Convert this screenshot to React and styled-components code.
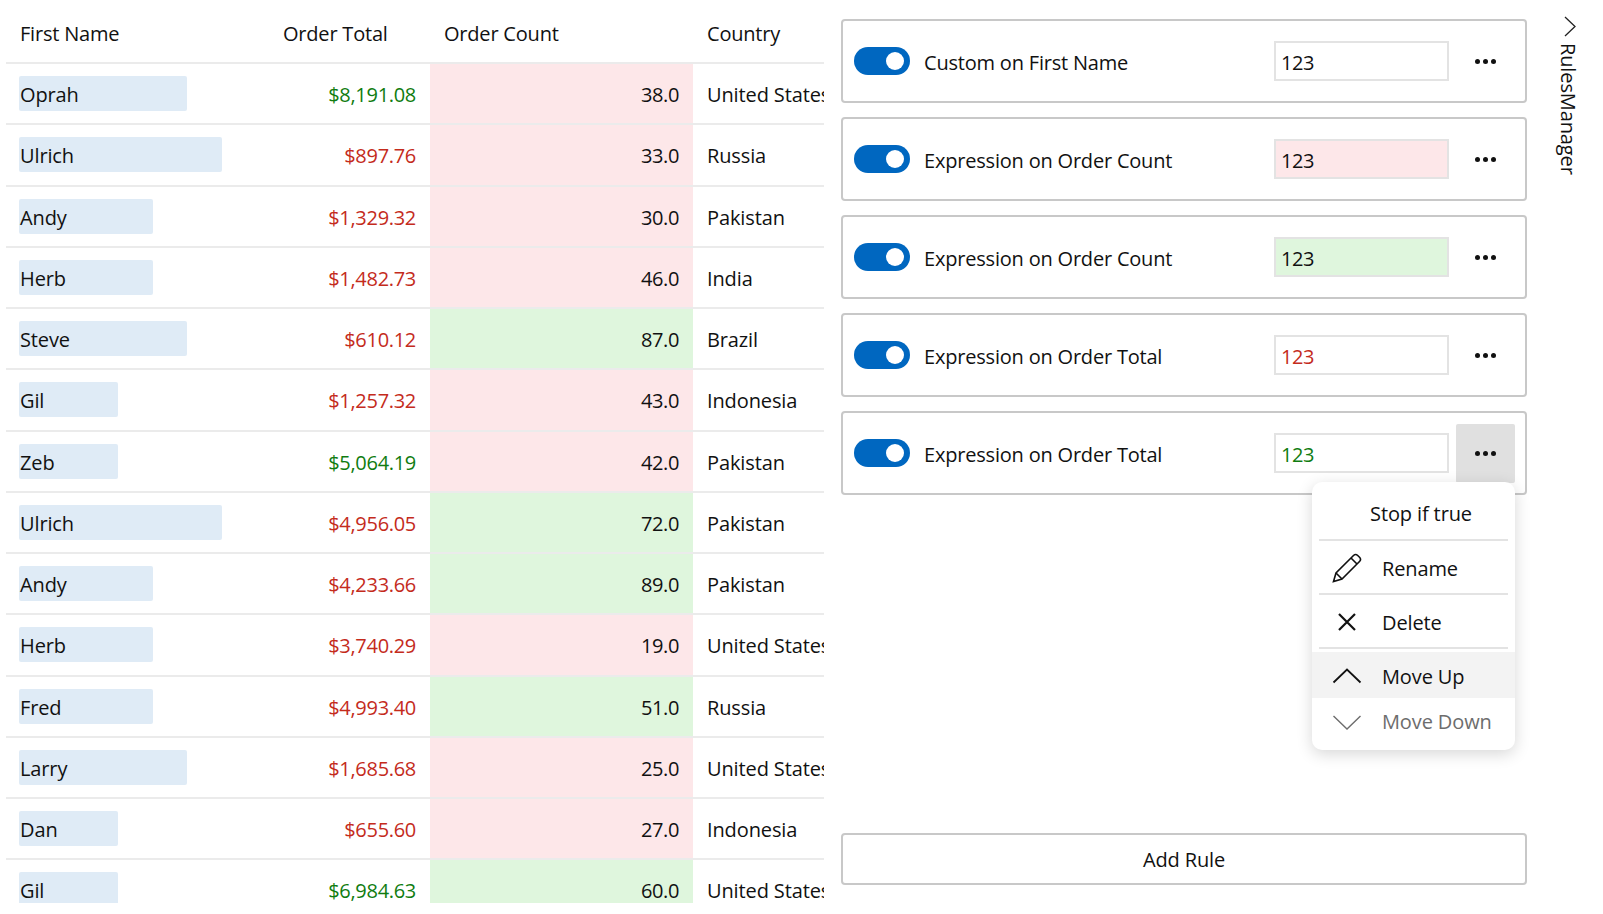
import React from 'react'
import styled, { createGlobalStyle } from 'styled-components'

const GlobalStyle = createGlobalStyle`
  html, body {
    margin: 0;
    padding: 0;
    background: #fff;
  }
  body {
    font-family: "Open Sans", "Noto Sans", sans-serif;
    font-size: 20px;
    letter-spacing: -0.12px;
    color: #111;
  }
`

const Page = styled.div`
  width: 1603px;
  height: 914px;
  overflow: hidden;
  display: flex;
  background: #fff;
`

const Table = styled.div`
  width: 818px;
  height: 903px;
  margin-left: 6px;
  overflow: hidden;
  flex-shrink: 0;
`

const Row = styled.div`
  display: grid;
  grid-template-columns: 263px 161px 263px 131px;
  box-sizing: border-box;
  height: ${p => (p.$header ? '64px' : '61.25px')};
  border-bottom: 2px solid #ebebeb;
  ${p => p.$header && 'padding-top: 4px;'}
`

const HeaderCell = styled.div`
  display: flex;
  align-items: center;
  padding-left: 14px;
  letter-spacing: -0.2px;
`

const NameCell = styled.div`
  display: flex;
  align-items: center;
  padding-left: 13px;
`

const NameBar = styled.div`
  box-sizing: border-box;
  width: ${p => p.$width}px;
  height: 35px;
  padding: 2px 0 0 1px;
  display: flex;
  align-items: center;
  background: #dfebf6;
  border-radius: 2px;
`

const TotalCell = styled.div`
  display: flex;
  align-items: center;
  justify-content: flex-end;
  padding: 2px 14px 0 0;
  letter-spacing: -0.3px;
  color: ${p => (p.$up ? '#107c10' : '#c42b1c')};
`

const CountCell = styled.div`
  display: flex;
  align-items: center;
  justify-content: flex-end;
  padding: 2px 14px 0 0;
  letter-spacing: -0.4px;
  background: ${p => (p.$high ? '#dff6dd' : '#fde7e9')};
`

const CountryCell = styled.div`
  display: flex;
  align-items: center;
  padding: 2px 0 0 14px;
  white-space: nowrap;
  overflow: hidden;
`

const Panel = styled.div`
  width: 686px;
  margin-left: 17px;
  flex-shrink: 0;
  display: flex;
  flex-direction: column;
  padding: 19px 0 29px;
  box-sizing: border-box;
`

const RuleList = styled.div`
  flex: 1;
  display: flex;
  flex-direction: column;
  gap: 14px;
`

const RuleCard = styled.div`
  position: relative;
  box-sizing: border-box;
  height: 84px;
  display: flex;
  align-items: center;
  padding: 0 10px 0 11px;
  border: 2px solid #c8c8c8;
  border-radius: 4px;
`

const Toggle = styled.div`
  width: 56px;
  height: 28px;
  border-radius: 14px;
  background: #0067c0;
  display: flex;
  align-items: center;
  justify-content: flex-end;
  padding-right: 6px;
  box-sizing: border-box;
  flex-shrink: 0;
`

const Knob = styled.div`
  width: 18px;
  height: 18px;
  border-radius: 50%;
  background: #fff;
`

const RuleName = styled.div`
  flex: 1;
  margin-left: 14px;
  padding-top: 2px;
  letter-spacing: -0.2px;
`

const Preview = styled.div`
  box-sizing: border-box;
  width: 175px;
  height: 40px;
  padding: 2px 0 0 5px;
  letter-spacing: -0.4px;
  display: flex;
  align-items: center;
  border: 2px solid #e3e3e3;
  background: ${p => p.$bg || '#fff'};
  color: ${p => p.$color || '#111'};
`

const MenuButton = styled.div`
  width: 59px;
  height: 59px;
  margin-left: 7px;
  display: flex;
  align-items: center;
  justify-content: center;
  gap: 3px;
  border-radius: 2px;
  background: ${p => (p.$open ? '#e0e0e0' : 'transparent')};
`

const Dot = styled.span`
  width: 5px;
  height: 5px;
  border-radius: 50%;
  background: #111;
`

const Flyout = styled.div`
  position: absolute;
  z-index: 2;
  top: 69px;
  right: 10px;
  width: 203px;
  height: 268px;
  box-sizing: border-box;
  background: #fff;
  border-radius: 10px;
  box-shadow: 0 4px 16px rgba(0, 0, 0, 0.16);
  display: flex;
  flex-direction: column;
`

const StopItem = styled.div`
  box-sizing: border-box;
  height: 57px;
  padding: 5px 0 0 15px;
  display: flex;
  align-items: center;
  justify-content: center;
  flex-shrink: 0;
`

const Separator = styled.div`
  height: 2px;
  margin: 0 7px;
  background: #e3e3e3;
  flex-shrink: 0;
`

const MenuItem = styled.div`
  box-sizing: border-box;
  height: ${p => p.$height}px;
  margin-top: ${p => p.$gap || 0}px;
  padding-top: ${p => (p.$muted ? 0 : 2)}px;
  display: flex;
  align-items: center;
  flex-shrink: 0;
  background: ${p => (p.$hover ? '#f3f3f3' : 'transparent')};
  color: ${p => (p.$muted ? '#6d6d6d' : 'inherit')};
`

const MenuIcon = styled.svg`
  width: 30px;
  height: 30px;
  margin-left: 20px;
  margin-right: 20px;
  flex-shrink: 0;
  fill: none;
  stroke: currentColor;
  stroke-width: ${p => p.$weight || 1.6};
`

const AddButton = styled.div`
  height: 52px;
  padding-top: 1px;
  box-sizing: border-box;
  border: 2px solid #c8c8c8;
  border-radius: 4px;
  display: flex;
  align-items: center;
  justify-content: center;
`

const Rail = styled.div`
  flex: 1;
  display: flex;
  flex-direction: column;
  padding: 16px 0 0 28px;
`

const RailChevron = styled.svg`
  width: 12px;
  height: 21px;
  margin-left: 9px;
  fill: none;
  stroke: #222;
  stroke-width: 1.3;
`

const RailLabel = styled.div`
  writing-mode: vertical-rl;
  align-self: flex-start;
  margin: 6px 0 0 2px;
  line-height: 22px;
`

const orders = [
  ['Oprah', 168, '$8,191.08', true, '38.0', false, 'United States'],
  ['Ulrich', 203, '$897.76', false, '33.0', false, 'Russia'],
  ['Andy', 134, '$1,329.32', false, '30.0', false, 'Pakistan'],
  ['Herb', 134, '$1,482.73', false, '46.0', false, 'India'],
  ['Steve', 168, '$610.12', false, '87.0', true, 'Brazil'],
  ['Gil', 99, '$1,257.32', false, '43.0', false, 'Indonesia'],
  ['Zeb', 99, '$5,064.19', true, '42.0', false, 'Pakistan'],
  ['Ulrich', 203, '$4,956.05', false, '72.0', true, 'Pakistan'],
  ['Andy', 134, '$4,233.66', false, '89.0', true, 'Pakistan'],
  ['Herb', 134, '$3,740.29', false, '19.0', false, 'United States'],
  ['Fred', 134, '$4,993.40', false, '51.0', true, 'Russia'],
  ['Larry', 168, '$1,685.68', false, '25.0', false, 'United States'],
  ['Dan', 99, '$655.60', false, '27.0', false, 'Indonesia'],
  ['Gil', 99, '$6,984.63', true, '60.0', true, 'United States'],
]

const rules = [
  { name: 'Custom on First Name' },
  { name: 'Expression on Order Count', bg: '#fde7e9' },
  { name: 'Expression on Order Count', bg: '#dff6dd' },
  { name: 'Expression on Order Total', color: '#c42b1c' },
  { name: 'Expression on Order Total', color: '#107c10', open: true },
]

function RuleMenu() {
  return (
    <Flyout>
      <StopItem>Stop if true</StopItem>
      <Separator />
      <MenuItem $height={52}>
        <MenuIcon viewBox="0 0 30 30">
          <path d="M1.500 28.500L4 20 21.500 2.500a3 3 0 0 1 4.200 0l1.800 1.800a3 3 0 0 1 0 4.200L10 26z" />
          <path d="M19 5l6 6M4 20l6 6" />
        </MenuIcon>
        Rename
      </MenuItem>
      <Separator />
      <MenuItem $height={52}>
        <MenuIcon viewBox="0 0 30 30" $weight={2.2}>
          <path d="M7 7l16 16M23 7L7 23" />
        </MenuIcon>
        Delete
      </MenuItem>
      <Separator />
      <MenuItem $height={46} $gap={3} $hover>
        <MenuIcon viewBox="0 0 30 30" $weight={1.8}>
          <path d="M1.500 21.500L15 8.500l13.500 13" />
        </MenuIcon>
        Move Up
      </MenuItem>
      <MenuItem $height={47} $muted>
        <MenuIcon viewBox="0 0 30 30" $weight={1.4}>
          <path d="M1.500 9L15 22l13.500-13" />
        </MenuIcon>
        Move Down
      </MenuItem>
    </Flyout>
  )
}

export default function App() {
  return (
    <Page>
      <GlobalStyle />
      <Table>
        <Row $header>
          <HeaderCell>First Name</HeaderCell>
          <HeaderCell>Order Total</HeaderCell>
          <HeaderCell>Order Count</HeaderCell>
          <HeaderCell>Country</HeaderCell>
        </Row>
        {orders.map(([name, width, total, up, count, high, country], i) => (
          <Row key={i}>
            <NameCell>
              <NameBar $width={width}>{name}</NameBar>
            </NameCell>
            <TotalCell $up={up}>{total}</TotalCell>
            <CountCell $high={high}>{count}</CountCell>
            <CountryCell>{country}</CountryCell>
          </Row>
        ))}
      </Table>
      <Panel>
        <RuleList>
          {rules.map((rule, i) => (
            <RuleCard key={i}>
              <Toggle>
                <Knob />
              </Toggle>
              <RuleName>{rule.name}</RuleName>
              <Preview $bg={rule.bg} $color={rule.color}>
                123
              </Preview>
              <MenuButton $open={rule.open}>
                <Dot />
                <Dot />
                <Dot />
              </MenuButton>
              {rule.open && <RuleMenu />}
            </RuleCard>
          ))}
        </RuleList>
        <AddButton>Add Rule</AddButton>
      </Panel>
      <Rail>
        <RailChevron viewBox="0 0 12 21">
          <path d="M1 1l10 9.500L1 20" />
        </RailChevron>
        <RailLabel>RulesManager</RailLabel>
      </Rail>
    </Page>
  )
}
